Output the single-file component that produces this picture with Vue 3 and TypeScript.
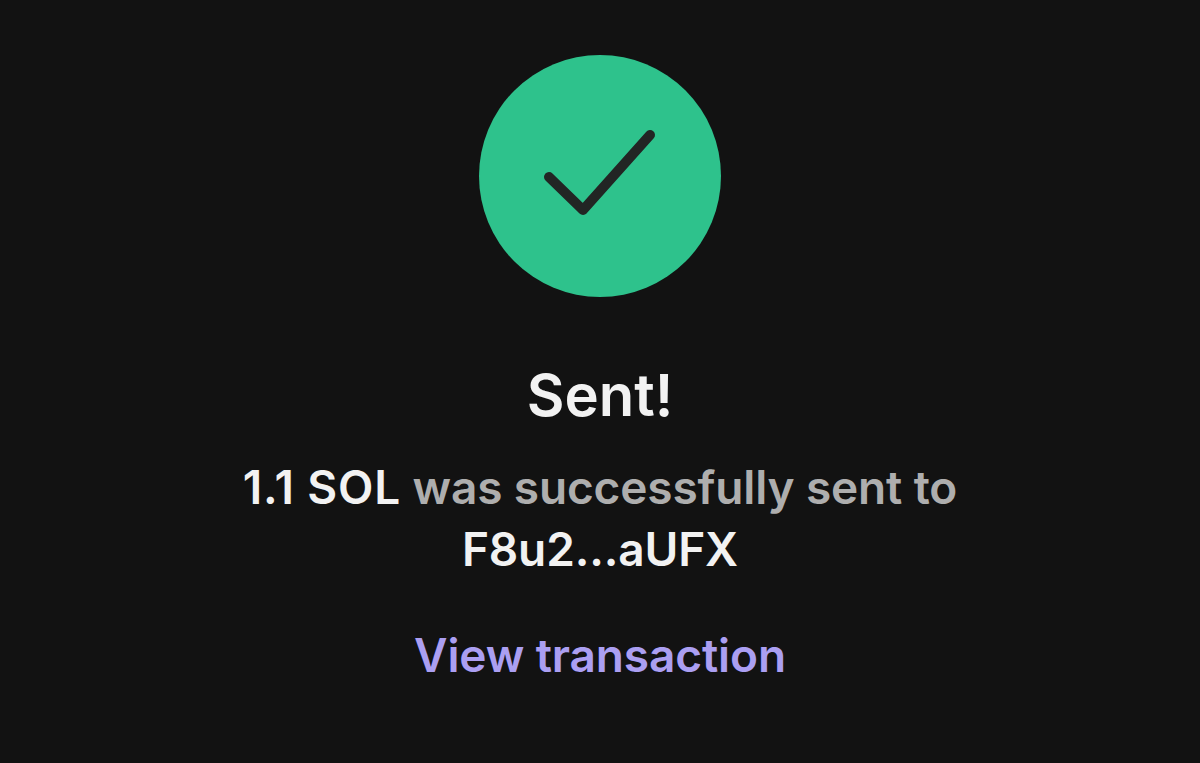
<template>
  <main class="screen">
    <div class="badge">
      <svg width="242" height="242" viewBox="0 0 242 242">
        <circle cx="121" cy="121" r="121" fill="#2ec28c" />
        <path d="M70 122 L104 155 L171 80" fill="none" stroke="#222524" stroke-width="10" stroke-linecap="round" stroke-linejoin="round" />
      </svg>
    </div>
    <h1 class="title">Sent!</h1>
    <p class="message"><b class="amount">1.1 SOL</b> was successfully sent to<br /><b>F8u2...aUFX</b></p>
    <a class="link">{{ linkText }}</a>
  </main>
</template>

<script setup lang="ts">
const linkText: string = 'View transaction'
</script>

<style>
html, body {
  background: #121212;
}
</style>

<style scoped>
.screen {
  width: 1200px;
  height: 763px;
  overflow: hidden;
  background: #121212;
  display: flex;
  flex-direction: column;
  align-items: center;
  font-family: Inter, "Liberation Sans", sans-serif;
}
.badge {
  margin-top: 55px;
  height: 242px;
}
.title {
  margin: 66px 0 0;
  font-size: 58px;
  line-height: 64px;
  font-weight: 600;
  color: #f2f2f2;
}
.message {
  margin: 29px 0 0;
  font-size: 46px;
  line-height: 62px;
  font-weight: 600;
  letter-spacing: -0.14px;
  text-align: center;
  color: #aeaeae;
}
.message b {
  font-weight: 600;
  color: #f2f2f2;
}
.message .amount {
  letter-spacing: 0.85px;
}
.link {
  margin-top: 44px;
  font-size: 46px;
  line-height: 62px;
  font-weight: 600;
  letter-spacing: -0.12px;
  color: #ab9ff2;
}
</style>
